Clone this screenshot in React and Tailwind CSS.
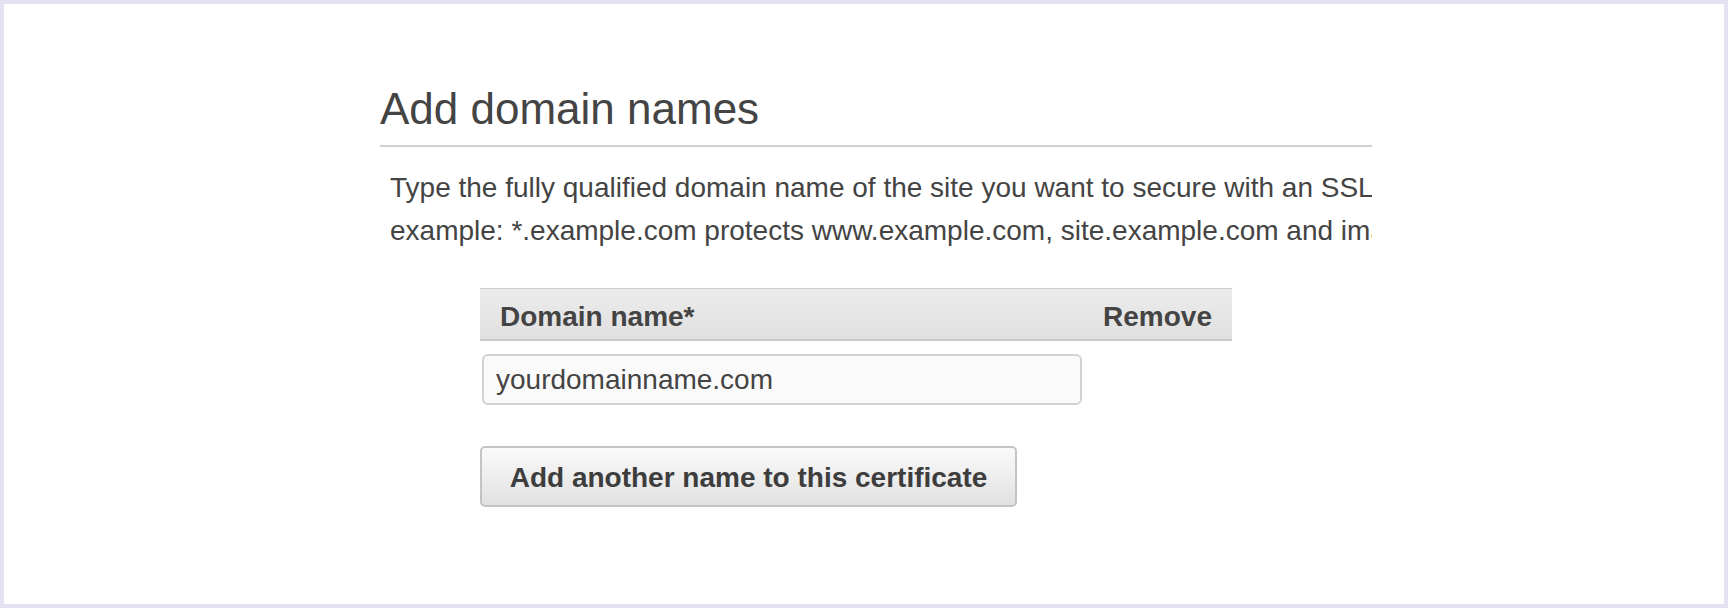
export default function App() {
  return (
    <div
      className="w-[1728px] h-[608px] border-4 border-[#e3e2f0] bg-white overflow-hidden text-[#444]"
      style={{ fontFamily: '"Liberation Sans", Arial, sans-serif' }}
    >
      <div className="ml-[376px] w-[992px] pt-[80px] overflow-hidden">
        <h1 className="text-[44px] leading-[50px] font-normal text-[#444]">Add domain names</h1>
        <div className="mt-[11px] h-[2px] bg-[#d0d0d0]" />

        <div className="mt-[19px] pl-[10px] text-[28px] leading-[43px] whitespace-nowrap">
          <div>
            Type the fully qualified domain name of the site you want to secure with an SSL/TLS certificate (for
            example, www.example.com). Use an asterisk (*) to request a wildcard certificate to protect several sites in
            the same domain. For
          </div>
          <div>example: *.example.com protects www.example.com, site.example.com and images.example.com.</div>
        </div>

        <div className="ml-[100px] mt-[36px] w-[752px]">
          <div className="flex justify-between border-t border-b-2 border-t-[#cfcfcf] border-b-[#c9c9c9] bg-gradient-to-b from-[#ececec] to-[#e0e0e0] px-[20px] pt-[12px] pb-[6px] text-[28px] leading-[32px] font-bold">
            <span>Domain name*</span>
            <span>Remove</span>
          </div>

          <div className="mt-[13px] ml-[2px] w-[600px] h-[51px] rounded-[6px] border-2 border-[#d2d2d2] bg-[#fafafa] flex items-center pl-[12px] text-[28px]">
            yourdomainname.com
          </div>

          <button className="mt-[41px] w-[537px] h-[61px] rounded-[5px] border-2 border-[#c4c4c4] bg-gradient-to-b from-[#fafafa] to-[#e1e1e1] flex items-center justify-center pt-[2px] text-[28px] font-bold text-[#3d3d3d] whitespace-nowrap">
            Add another name to this certificate
          </button>
        </div>
      </div>
    </div>
  );
}
